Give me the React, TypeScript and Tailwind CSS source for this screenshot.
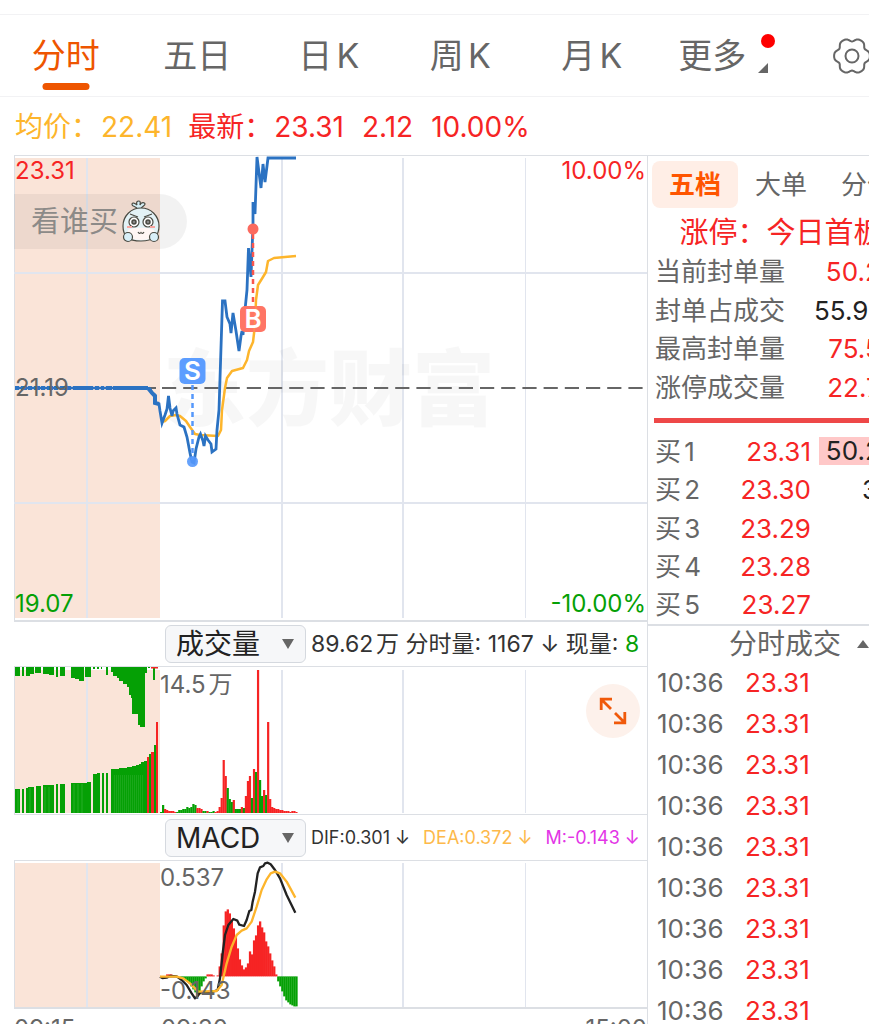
import { useState } from 'react';

type Bar = [color: 'r' | 'g', height: number];

const RED = '#f62424';
const GREEN = '#05a005';
const GRID = '#e1e5ee';
const STEP = 2.02;

const PERIODS = ['分时', '五日', '日K', '周K', '月K'];

const SEAL_ROWS = [
  { label: '当前封单量', value: '50.2万', red: true },
  { label: '封单占成交', value: '55.93%', red: false },
  { label: '最高封单量', value: '75.5万', red: true },
  { label: '涨停成交量', value: '22.7万', red: true },
];

const BIDS = [
  { label: '买1', price: '23.31', volume: '50.2万' },
  { label: '买2', price: '23.30', volume: '326' },
  { label: '买3', price: '23.29', volume: '' },
  { label: '买4', price: '23.28', volume: '' },
  { label: '买5', price: '23.27', volume: '' },
];

const TRADES = Array.from({ length: 9 }, () => ({ time: '10:36', price: '23.31' }));

const PRICE_LINE =
  '147,388 150,389 152,393 155,395 155,403 159,404 160,411 162,423 165,415 167,409 168.5,396 170,408 172,416 173,411 176,408 177,414 180,425 184,427 187,437 190,453 192,462 194,463 196,449 199,437 200.5,434 203,441 204,446 205.5,436 208,440 211,444 212,452 216,449 217,430 219,410 222.5,301 225,301 227,317 230,324 231,333 233,313 236,331 239,351 241,336 242,331 243,335 245,310 247,290 248.5,248 251,277 253,225 253,202 255,214 257,157 261,188 263,164 265,182 268,158 296,158';

const AVG_LINE =
  '162,422 165,421 170,416 176,415 180,416 186,421 190,427 195,434 200,435 218,436 221,430 222,410 225,388 227,378 232,371 243,368 247,360 249,351 253,342 255,325 256,300 258,285 263,277 266,272 268,261 274,258 285,257 296,256';

const DIF_LINE =
  '480,500 487,504 500,503 510,498 530,499 545,510 560,525 575,550 585,565 592,560 600,548 640,545 653,540 660,505 668,430 675,375 685,345 700,327 712,332 718,344 732,348 740,330 748,303 754,300 758,275 765,245 773,190 780,172 790,168 795,160 803,158 812,163 825,180 840,205 860,255 886,308';

const DEA_LINE =
  '480,500 530,500 550,505 570,520 585,535 595,545 650,543 665,525 680,460 695,410 710,375 725,362 740,355 755,335 770,290 785,240 800,208 812,190 825,185 840,190 860,215 886,263';

const VOLUME: Bar[] = [
  ['g', 1], ['g', 8], ['r', 4], ['r', 3], ['r', 2], ['r', 2], ['r', 2], ['r', 1], ['g', 1], ['g', 3],
  ['g', 3], ['g', 4], ['g', 4], ['g', 6], ['g', 5], ['g', 6], ['g', 9], ['g', 8], ['r', 5], ['r', 5],
  ['r', 4], ['g', 2], ['g', 2], ['r', 2], ['g', 1], ['g', 1], ['g', 2], ['r', 1], ['r', 2], ['r', 6],
  ['r', 15], ['r', 53], ['r', 37], ['g', 25], ['g', 14], ['g', 11], ['r', 13], ['g', 4], ['g', 4], ['g', 4],
  ['r', 6], ['g', 5], ['r', 17], ['r', 32], ['r', 37], ['g', 15], ['r', 44], ['g', 41], ['r', 143], ['g', 33],
  ['g', 17], ['r', 23], ['g', 18], ['r', 91], ['r', 14], ['r', 6], ['r', 5], ['r', 4], ['r', 4], ['r', 3],
  ['r', 3], ['r', 2], ['r', 2], ['r', 2], ['r', 1], ['r', 2], ['r', 2], ['r', 1],
];

const MACD = [
  0, 0, 0, 2, 2, 2, 1, 0, 0, 0, -1, -2, -4, -5, -7, -10, -13, -16, -18, -18, -10, -5, -2, 2, 2, 2, 1, 0, 1, 10,
  23, 51, 65, 67, 63, 56, 48, 40, 28, 17, 11, 7, 9, 13, 25, 22, 36, 41, 51, 55, 49, 44, 35, 30, 23, 16, 10, 2,
  -5, -10, -15, -20, -24, -26, -28, -29, -30, -30,
];

// Call auction: [x, width, height]
const MATCHED = [
  [15, 5, 24], [22, 2, 24], [26, 2, 25], [28, 6, 26], [36, 5, 27], [43, 11, 28], [56, 2, 29], [60, 5, 29],
  [71, 16, 30], [87, 4, 31], [93, 4, 39], [97, 3, 40], [102, 2, 40], [106, 2, 40], [111, 8, 44], [119, 8, 45],
  [127, 5, 46], [132, 4, 47], [136, 3, 48], [139, 2, 49], [141, 3, 51], [144, 3, 52],
];
const UNMATCHED = [
  [15, 5, 9], [22, 2, 9], [26, 4, 9], [30, 4, 7], [35, 6, 6], [43, 6, 7], [49, 5, 8], [56, 2, 10], [60, 5, 9],
  [71, 4, 11], [75, 4, 12], [79, 5, 14], [85, 6, 10], [93, 2, 2], [97, 2, 2], [101, 1, 2], [106, 2, 8],
  [111, 2, 5], [113, 4, 9], [117, 3, 11], [119, 4, 14], [123, 4, 17], [127, 2, 20], [129, 2, 28], [131, 2, 31],
  [132, 6, 47], [138, 2, 58], [140, 5, 60], [145, 2, 6], [148, 2, 1], [153, 2, 13],
];

const GEAR = Array.from({ length: 72 }, (_, i) => {
  const a = (i * Math.PI) / 36;
  const r = 16.6 + 1.7 * Math.cos(6 * a) - 0.4 * Math.cos(12 * a);
  return `${(20 + r * Math.cos(a)).toFixed(2)},${(20 + r * Math.sin(a)).toFixed(2)}`;
}).join(' ');

function Grid({ top, height }: { top: number; height: number }) {
  return (
    <g fill={GRID}>
      <rect x={14} y={top - 3} width={1} height={height + 6} fill="#dcdfe4" />
      <rect x={15} y={top} width={145} height={height} fill="#fae4d8" />
      <rect x={86} y={top} width={2} height={height} />
      <rect x={281} y={top} width={2} height={height} />
      <rect x={402} y={top} width={2} height={height} />
      <rect x={525} y={top} width={1} height={height} />
    </g>
  );
}

function Mascot() {
  return (
    <svg viewBox="0 0 38 43" className="w-[38px] h-[43px]" fill="none" stroke="#4a4a42" strokeWidth="1.2" aria-hidden="true">
      <path d="M15 9C15 6 10 7 10 4.500C10 2 13 3 15 5C14 2 15 1 17 1C19 1 18 4 18 5C19 2 23 2 23 4C23 6 20 6 19 9Z" fill="#d5eef5" />
      <path d="M19 8C29 8 37 16 37 26C37 36 32 41 19 41C6 41 1 36 1 26C1 16 9 8 19 8Z" fill="#e3f2f6" />
      <path d="M6 30C10 27 28 27 32 30C34 36 29 40 19 40C9 40 4 36 6 30Z" fill="#fff6f4" stroke="none" />
      <path d="M8 14L16 17M30 14L22 17" />
      <circle cx="12" cy="22" r="5" fill="#fff" />
      <circle cx="26" cy="22" r="5" fill="#fff" />
      <circle cx="12" cy="22" r="2" fill="#888" strokeWidth="1.500" />
      <circle cx="26" cy="22" r="2" fill="#888" strokeWidth="1.500" />
      <path d="M5 27h5M28 27h5" stroke="#f9a5a0" strokeWidth="2" />
      <path d="M16 32q1.500 2.500 3 0.500q1.500 2 3 -0.500" />
      <circle cx="6" cy="37" r="4.500" fill="#d9eff8" />
      <circle cx="32" cy="37" r="4.500" fill="#d9eff8" />
    </svg>
  );
}

function IndicatorSelect({ label, options }: { label: string; options: string[] }) {
  return (
    <div className="relative w-[141px] h-[38px] shrink-0">
      <select
        aria-label={label}
        className="appearance-none w-full h-full pl-[10px] text-[28px] leading-[34px] text-[#222] bg-[#f6f7f9] border border-[#d5d9df] rounded-md"
      >
        {options.map((o) => (
          <option key={o}>{o}</option>
        ))}
      </select>
      <svg viewBox="0 0 12 10" className="absolute right-[12px] top-[14px] w-[12px] h-[10px] pointer-events-none">
        <path d="M0 0H12L6 10Z" fill="#666" />
      </svg>
    </div>
  );
}

function PriceChart() {
  return (
    <div className="relative">
      <svg viewBox="14 156 633 464" preserveAspectRatio="none" className="block w-full h-[464px]">
        <Grid top={158} height={460} />
        <rect x={14} y={272} width={633} height={2} fill={GRID} />
        <rect x={14} y={502} width={633} height={2} fill={GRID} />
        <text x={163} y={419} fontSize={83} fontWeight={900} fill="#000" fillOpacity={0.03}>
          东方财富
        </text>
        <path d="M145 388H156" stroke="#666" strokeWidth={2} />
        <path d="M162 388H647" stroke="#666" strokeWidth={2} strokeDasharray="14.2 7" />
        <polyline points={AVG_LINE} fill="none" stroke="#fdb52c" strokeWidth={2.5} strokeLinejoin="round" />
        <path d="M15 388H148" stroke="#2b72c2" strokeWidth={2.5} />
        <path d="M15 388H72" stroke="#2b72c2" strokeWidth={4} strokeDasharray="4 2 6 1" />
        <path d="M73 388H112" stroke="#2b72c2" strokeWidth={4} strokeDasharray="20 2 4 2 3 2" />
        <path d="M113 388H148" stroke="#2b72c2" strokeWidth={4} />
        <path d="M148 388L152 393L155 396L155 403L159 404" fill="none" stroke="#2b72c2" strokeWidth={4} />
        <polyline points={PRICE_LINE} fill="none" stroke="#2b72c2" strokeWidth={2.8} />

        <path d="M192.500 385V460" stroke="#5598fb" strokeWidth={2.5} strokeDasharray="5 4" />
        <circle cx={192.5} cy={461.5} r={5.5} fill="#5598fb" fillOpacity={0.9} />
        <rect x={179.5} y={358} width={26} height={26} rx={5} fill="#5c9dff" />
        <text x={192.5} y={380} textAnchor="middle" fontSize={26} fontWeight={600} fill="#fff">
          S
        </text>

        <path d="M253 234V306" stroke="#f9564d" strokeWidth={2.5} strokeDasharray="5 4" />
        <circle cx={253} cy={229} r={5.5} fill="#fb6a5f" />
        <rect x={240} y={306} width={26} height={26} rx={5} fill="#ff7565" />
        <path d="M256 306C255 316 255 322 254 332" stroke="#ff8a55" strokeWidth={2} fill="none" />
        <text x={253} y={328} textAnchor="middle" fontSize={26} fontWeight={600} fill="#fff">
          B
        </text>
      </svg>
      <span className="absolute left-px top-[1px] text-[24px] leading-[28px] text-[#f62424]">23.31</span>
      <span className="absolute right-px top-[1px] text-[24px] leading-[28px] text-[#f62424]">10.00%</span>
      <span className="absolute left-px top-[218px] text-[24px] leading-[28px] text-[#666]">21.19</span>
      <span className="absolute left-px bottom-[2px] text-[24px] leading-[28px] text-[#05a005]">19.07</span>
      <span className="absolute right-px bottom-[2px] text-[24px] leading-[28px] text-[#05a005]">-10.00%</span>
      <button className="absolute left-0 top-[38px] h-[55px] pl-[17px] pr-[27px] flex items-center gap-[4px] rounded-r-full bg-black/5 text-[29px] text-[#8c8a88]">
        看谁买
        <Mascot />
      </button>
    </div>
  );
}

function VolumeChart() {
  return (
    <div className="relative">
      <svg viewBox="14 667 633 147" preserveAspectRatio="none" className="block w-full h-[147px]">
        <Grid top={670} height={143} />
        {MATCHED.map(([x, w, h]) => (
          <rect key={x} x={x} y={813 - h} width={w} height={h} fill={GREEN} />
        ))}
        {UNMATCHED.map(([x, w, h]) => (
          <rect key={x} x={x} y={667} width={w} height={h} fill={GREEN} />
        ))}
        {Array.from({ length: 15 }, (_, i) => (
          <rect key={i} x={114 + i * 2} y={775} width={0.3} height={38} fill="#4fbd4f" />
        ))}
        <path d="M18 790V813M30 788V813M45 787V813M49 787V813M74 784V813M78 784V813M82 784V813" stroke="#4fbd4f" strokeWidth={0.5} />
        <rect x={147} y={757} width={2} height={56} fill={RED} />
        <rect x={149} y={754} width={2} height={59} fill={GREEN} />
        <rect x={151} y={752} width={3} height={61} fill={RED} />
        <rect x={154} y={745} width={2} height={68} fill={GREEN} />
        <rect x={156} y={722} width={2} height={91} fill={RED} />
        <rect x={151} y={667} width={7} height={1.5} fill={RED} />
        {VOLUME.map(([color, h], i) => (
          <rect key={i} x={160 + i * STEP} y={813 - h} width={2.2} height={h} fill={color === 'r' ? RED : GREEN} />
        ))}
      </svg>
      <span className="absolute left-[146px] top-[4px] text-[24px] leading-[28px] text-[#666]">14.5万</span>
      <button
        aria-label="全屏"
        className="absolute right-[7px] top-[17px] size-[54px] rounded-full bg-[#fdf1eb] flex items-center justify-center"
      >
        <svg viewBox="0 0 28 28" className="size-[28px]" fill="none" stroke="#f0590a" strokeWidth="2.8">
          <path d="M2.200 13V2.200H13M2.500 2.500L12 12M25.800 15V25.800H15M25.500 25.500L16 16" />
        </svg>
      </button>
    </div>
  );
}

function MacdChart() {
  return (
    <div className="relative">
      <span className="absolute left-[146px] top-[3px] text-[24px] leading-[28px] text-[#666]">0.537</span>
      <svg viewBox="42 153 1899 438" preserveAspectRatio="none" className="block w-full h-[146px]">
        <g transform="scale(3)">
          <Grid top={53} height={144} />
          {MACD.map((v, i) => (
            <rect
              key={i}
              x={160 + i * STEP}
              y={v > 0 ? 166.4 - v : 166.4}
              width={v === 0 ? 0 : 2.3}
              height={Math.abs(v)}
              fill={v > 0 ? RED : GREEN}
            />
          ))}
        </g>
        <polyline points={DIF_LINE} fill="none" stroke="#222" strokeWidth={7} strokeLinejoin="round" />
        <polyline points={DEA_LINE} fill="none" stroke="#fdb52c" strokeWidth={7} strokeLinejoin="round" />
      </svg>
      <span className="absolute left-[146px] bottom-[2px] text-[24px] leading-[28px] text-[#666]">-0.143</span>
    </div>
  );
}

function App() {
  const [period, setPeriod] = useState('分时');

  return (
    <div className="h-screen overflow-hidden flex flex-col bg-white text-[#666] font-[Inter,'Noto_Sans_CJK_SC',sans-serif] [text-autospace:normal] whitespace-nowrap">
      {/* Period tabs */}
      <nav className="mt-[14px] h-[83px] shrink-0 flex border-t border-b border-[#f2f2f4] text-[34px]">
        {PERIODS.map((p) => (
          <button
            key={p}
            onClick={() => setPeriod(p)}
            className={`relative flex-1 ${p === period ? 'text-[#ee5500]' : ''}`}
          >
            {p}
            {p === period && (
              <span className="absolute left-1/2 -translate-x-1/2 bottom-[6px] w-[47px] h-[7px] rounded-full bg-[#ee5500]" />
            )}
          </button>
        ))}
        <button className="relative flex-1 flex items-center justify-center gap-[12px]">
          更多
          <svg viewBox="0 0 10 10" className="size-[10px] mt-[24px]">
            <path d="M10 0V10H0Z" fill="#666" />
          </svg>
          <span className="absolute right-[14px] top-[19px] size-[14px] rounded-full bg-[#fe0000]" />
        </button>
        <button aria-label="设置" className="w-[80px] shrink-0 flex items-center pl-[43px]">
          <svg viewBox="0 0 40 40" className="size-[40px] shrink-0" fill="none" stroke="#666" strokeWidth="2">
            <polygon points={GEAR} strokeLinejoin="round" />
            <circle cx="20" cy="20" r="6.500" />
          </svg>
        </button>
      </nav>

      <div className="h-[58px] shrink-0 flex items-center pt-[2px] pl-[15px] gap-[16px] text-[28px] text-[#f62424]">
        <p className="flex gap-[2px] text-[#fdb52c]">
          <span>均价：</span>
          <span>22.41</span>
        </p>
        <p className="flex gap-[2px]">
          <span>最新：</span>
          <span>23.31</span>
        </p>
        <p className="flex gap-[18px] pl-[2px]">
          <span>2.12</span>
          <span>10.00%</span>
        </p>
      </div>

      <div className="flex-1 min-h-0 flex">
        {/* Charts */}
        <main className="flex-1 min-w-0 pl-[14px]">
          <div className="border-t border-[#dcdfe4]">
            <PriceChart />
          </div>
          <div className="h-[47px] flex items-center pl-[151px] border-t-2 border-b border-[#dcdfe4]">
            <IndicatorSelect label="副图指标一" options={['成交量', '量比']} />
            <p className="pl-[5px] text-[23px] text-[#333]">
              89.62万 分时量: 1167 ↓ 现量: <span className="text-[#05a005]">8</span>
            </p>
          </div>
          <VolumeChart />
          <div className="h-[47px] flex items-center pl-[151px] border-t border-b border-[#dcdfe4]">
            <IndicatorSelect label="副图指标二" options={['MACD', 'KDJ']} />
            <p className="pl-[5px] flex gap-[13px] text-[18px] text-[#333]">
              <span>DIF:0.301 ↓</span>
              <span className="text-[#fdb94a]">DEA:0.372 ↓</span>
              <span className="text-[#e335e6]">M:-0.143 ↓</span>
            </p>
          </div>
          <MacdChart />
          <div className="pt-[2px] flex border-t-2 border-[#dcdfe4] text-[24px]">
            <span className="w-[147px]">09:15</span>
            <span className="flex-1">09:30</span>
            <span>15:00</span>
          </div>
        </main>

        {/* Order book */}
        <aside className="w-[222px] shrink-0 overflow-hidden border-l border-t border-[#dcdfe4] text-[26px]">
          <div className="w-[266px] px-[4px]">
            <div className="grid grid-cols-3 mt-[5px] h-[47px]">
              <button className="rounded-lg bg-[#ffeee6] font-bold text-[#ff5500]">五档</button>
              <button>大单</button>
              <button>分价</button>
            </div>
            <p className="h-[44px] pt-[3px] leading-[44px] text-center text-[29px] text-[#f62424]">涨停：今日首板</p>
            <dl className="grid grid-rows-4 h-[155px] pl-[3px]">
              {SEAL_ROWS.map((row) => (
                <div key={row.label} className="flex items-center justify-between">
                  <dt>{row.label}</dt>
                  <dd className={row.red ? 'text-[#f62424]' : 'text-[#222]'}>{row.value}</dd>
                </div>
              ))}
            </dl>
          </div>
          <div className="ml-[6px] mt-[11px] h-[5px] bg-[#ee4848]" />
          <dl className="w-[266px] mt-[9px] grid grid-rows-5 h-[192px] pl-[7px]">
            {BIDS.map((bid, i) => (
              <div key={bid.label} className="flex items-center">
                <dt className="flex-1">{bid.label}</dt>
                <dd className="text-[#f62424]">{bid.price}</dd>
                <dd className={`ml-[8px] w-[95px] h-[28px] leading-[28px] pr-[4px] text-right text-[#222] ${i === 0 ? 'bg-[#ffc8c8]' : ''}`}>
                  {bid.volume}
                </dd>
              </div>
            ))}
          </dl>
          <button className="w-[266px] h-[38px] pl-[36px] flex items-center justify-center gap-[16px] border-t-2 border-[#dcdfe4] text-[28px]">
            分时成交
            <svg viewBox="0 0 12 8" className="w-[12px] h-[8px]">
              <path d="M0 8L6 0L12 8Z" fill="#666" />
            </svg>
          </button>
          <ul>
            {TRADES.map((trade, i) => (
              <li key={i} className="h-[41px] flex items-center pl-[9px]">
                <span className="w-[88px]">{trade.time}</span>
                <span className="text-[#f62424]">{trade.price}</span>
              </li>
            ))}
          </ul>
        </aside>
      </div>
    </div>
  );
}

export default App;
